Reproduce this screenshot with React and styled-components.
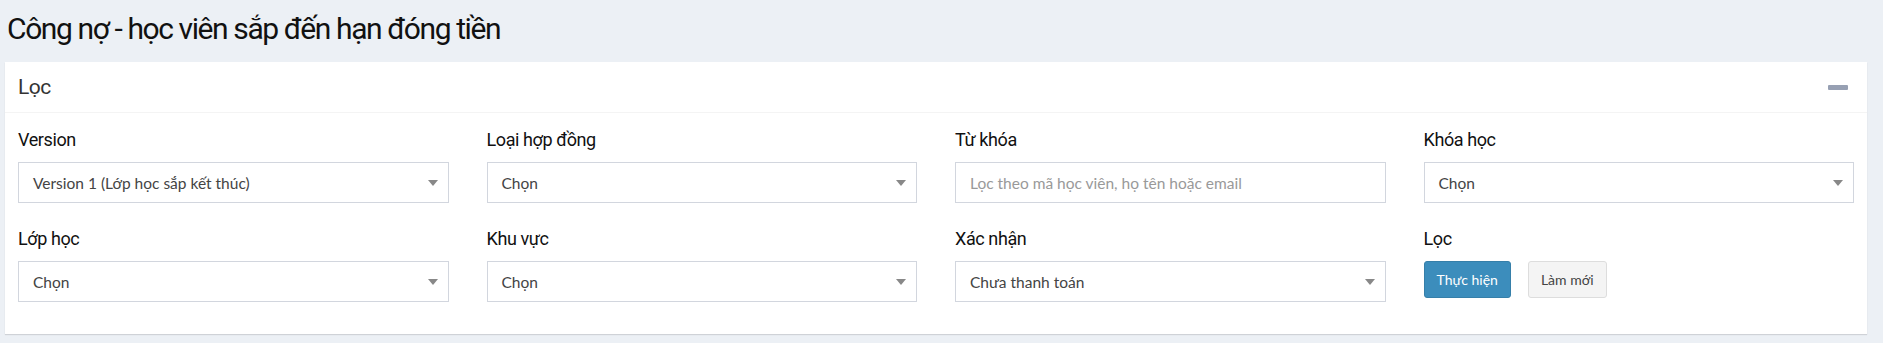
import React from 'react';
import { styled, createGlobalStyle } from 'styled-components';

const GlobalStyle = createGlobalStyle`
  html, body {
    margin: 0;
    padding: 0;
    background: #ecf0f5;
  }
  body {
    font-family: Lato, "Noto Sans", sans-serif;
  }
`;

const filters = [
  { label: 'Version', value: 'Version 1 (Lớp học sắp kết thúc)', type: 'select' },
  { label: 'Loại hợp đồng', value: 'Chọn', type: 'select' },
  { label: 'Từ khóa', value: 'Lọc theo mã học viên, họ tên hoặc email', type: 'input' },
  { label: 'Khóa học', value: 'Chọn', type: 'select' },
  { label: 'Lớp học', value: 'Chọn', type: 'select' },
  { label: 'Khu vực', value: 'Chọn', type: 'select' },
  { label: 'Xác nhận', value: 'Chưa thanh toán', type: 'select' },
];

function App() {
  return (
    <Page>
      <GlobalStyle />
      <Title>Công nợ - học viên sắp đến hạn đóng tiền</Title>
      <Box>
        <BoxHeader>
          <BoxTitle>Lọc</BoxTitle>
          <CollapseButton aria-label="collapse" />
        </BoxHeader>
        <BoxBody>
          {filters.map((f) => (
            <Field key={f.label}>
              <Label>{f.label}</Label>
              {f.type === 'select' ? (
                <Select>
                  <span>{f.value}</span>
                  <Arrow />
                </Select>
              ) : (
                <TextInput placeholder={f.value} />
              )}
            </Field>
          ))}
          <Field>
            <Label>Lọc</Label>
            <Actions>
              <Button $primary>Thực hiện</Button>
              <Button>Làm mới</Button>
            </Actions>
          </Field>
        </BoxBody>
      </Box>
    </Page>
  );
}

const Page = styled.div`
  padding: 8px 16px 10px 5px;
`;

const Title = styled.h1`
  margin: 0 0 12px 2px;
  font-family: Roboto, sans-serif;
  font-weight: 400;
  font-size: 30px;
  letter-spacing: -1.4px;
  line-height: 42px;
  color: #111;
`;

const Box = styled.div`
  background: #fff;
  box-shadow: 0 1px 1px rgba(0, 0, 0, 0.12);
`;

const BoxHeader = styled.div`
  display: flex;
  align-items: center;
  justify-content: space-between;
  height: 50px;
  padding: 0 19px 0 13px;
  border-bottom: 1px solid #f4f4f4;
`;

const BoxTitle = styled.h3`
  margin: 0;
  font-family: Roboto, sans-serif;
  font-weight: 400;
  font-size: 21px;
  letter-spacing: -0.5px;
  color: #333;
`;

const CollapseButton = styled.button`
  width: 20px;
  height: 5px;
  padding: 0;
  border: none;
  border-radius: 1px;
  background: #97a0b3;
`;

const BoxBody = styled.div`
  display: grid;
  grid-template-columns: repeat(4, 1fr);
  column-gap: 38px;
  row-gap: 25px;
  padding: 16px 13px 32px;
`;

const Field = styled.div`
  display: flex;
  flex-direction: column;
`;

const Label = styled.label`
  font-family: Roboto, sans-serif;
  font-size: 18px;
  letter-spacing: -0.4px;
  line-height: 22px;
  color: #111;
  margin-bottom: 11px;
`;

const Select = styled.div`
  position: relative;
  display: flex;
  align-items: center;
  height: 41px;
  box-sizing: border-box;
  padding: 0 30px 0 14px;
  border: 1px solid #d2d6de;
  font-size: 15.5px;
  color: #444;
`;

const Arrow = styled.span`
  position: absolute;
  right: 10px;
  top: 17px;
  width: 0;
  height: 0;
  border-style: solid;
  border-width: 6px 5px 0 5px;
  border-color: #888 transparent transparent transparent;
`;

const TextInput = styled.input`
  height: 41px;
  box-sizing: border-box;
  padding: 0 14px;
  border: 1px solid #d2d6de;
  font-family: Lato, "Noto Sans", sans-serif;
  font-size: 15.5px;
  color: #444;
  outline: none;
  &::placeholder {
    color: #999;
  }
`;

const Actions = styled.div`
  display: flex;
  gap: 17px;
`;

const Button = styled.button`
  height: 37px;
  padding: 0 12px;
  border-radius: 3px;
  border: 1px solid ${(p) => (p.$primary ? '#367fa9' : '#ddd')};
  background: ${(p) => (p.$primary ? '#3c8dbc' : '#f4f4f4')};
  color: ${(p) => (p.$primary ? '#fff' : '#444')};
  font-family: Lato, "Noto Sans", sans-serif;
  font-size: 14px;
`;

export default App;
